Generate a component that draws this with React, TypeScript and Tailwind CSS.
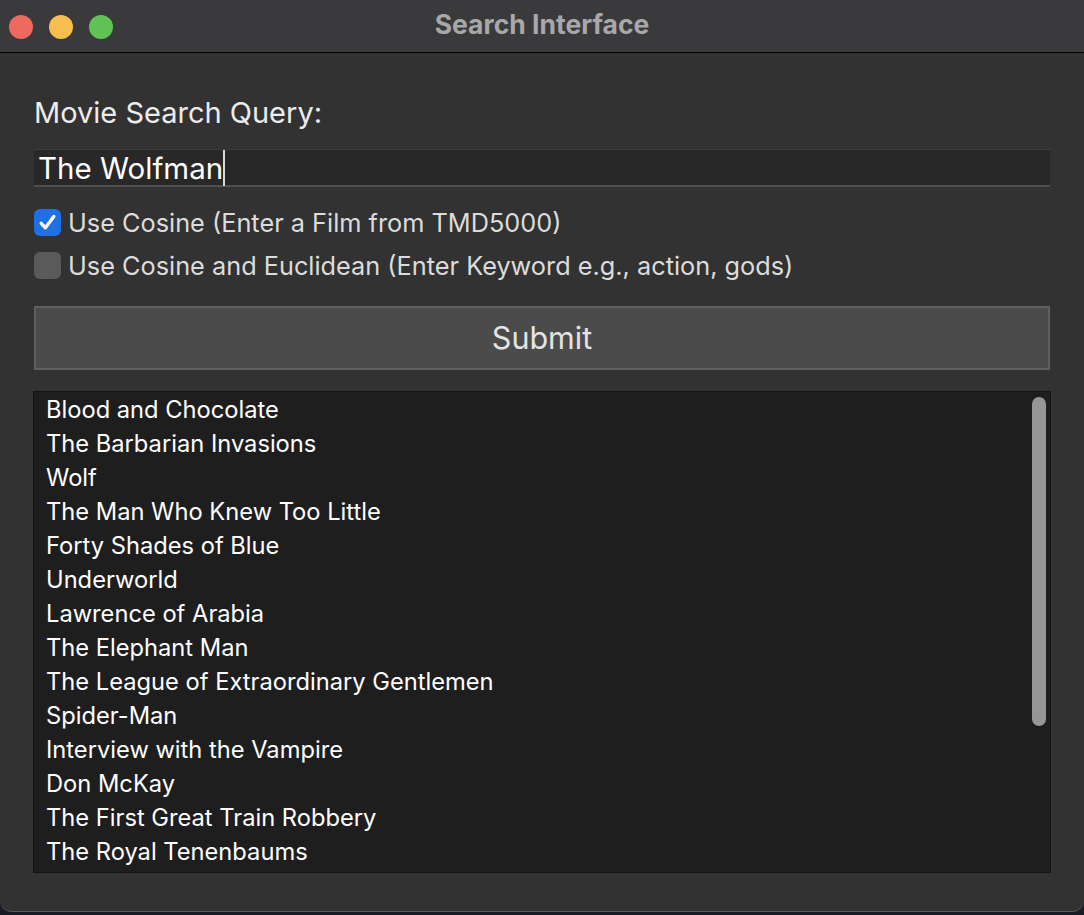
import React, { useState } from 'react';

const movies = [
  'Blood and Chocolate',
  'The Barbarian Invasions',
  'Wolf',
  'The Man Who Knew Too Little',
  'Forty Shades of Blue',
  'Underworld',
  'Lawrence of Arabia',
  'The Elephant Man',
  'The League of Extraordinary Gentlemen',
  'Spider-Man',
  'Interview with the Vampire',
  'Don McKay',
  'The First Great Train Robbery',
  'The Royal Tenenbaums',
];

function Check({ checked, label, onToggle }: { checked: boolean; label: string; onToggle: () => void }) {
  return (
    <div className="flex items-center gap-[7px] h-[27px] cursor-pointer" onClick={onToggle}>
      <span
        className={`w-[27px] h-[27px] shrink-0 rounded-[6px] flex items-center justify-center ${
          checked ? 'bg-[#1f6fe5]' : 'bg-[#5a5a5a]'
        }`}
      >
        {checked && (
          <svg width="21" height="21" viewBox="0 0 20 20" fill="none">
            <path d="M4 10.8 L8 15 L16 4.2" stroke="white" strokeWidth="3.2" strokeLinecap="round" strokeLinejoin="round" />
          </svg>
        )}
      </span>
      <span className="text-[25.3px] text-[#dcdcdc] whitespace-nowrap">{label}</span>
    </div>
  );
}

export default function App() {
  const [cosine, setCosine] = useState(true);
  const [euclid, setEuclid] = useState(false);

  return (
    <div
      className="w-[1084px] h-[915px] bg-[#1b1b26] overflow-hidden"
      style={{ fontFamily: 'Inter, "Liberation Sans", sans-serif' }}
    >
      <div className="h-[912px] flex flex-col bg-[#323232] rounded-b-[12px] border-b border-[#5a5a5a] overflow-hidden">
        {/* title bar */}
        <div className="relative h-[53px] shrink-0 bg-[#3a3a3c] border-b border-black flex items-center">
          <div className="flex items-center gap-4 pl-[9px] pt-[2px]">
            <span className="w-6 h-6 rounded-full bg-[#ee6a5f]" />
            <span className="w-6 h-6 rounded-full bg-[#f5be4f]" />
            <span className="w-6 h-6 rounded-full bg-[#5fc454]" />
          </div>
          <div className="absolute inset-0 flex items-center justify-center text-[26.5px] font-bold text-[#a8a8a8] pb-[3px]">
            Search Interface
          </div>
        </div>

        {/* body */}
        <div className="flex flex-col px-[34px] pt-[40px]">
          <label className="text-[29px] text-[#ececec] leading-[40px]">Movie Search Query:</label>

          <div className="mt-[16px] h-[38px] bg-[#282828] border-t border-[#3c3c3c] border-b-2 border-b-[#4f4f4f] flex items-center pl-[4px]">
            <span className="text-[29.5px] text-white leading-[36px] whitespace-nowrap">The Wolfman</span>
            <span className="w-[2px] h-[36px] bg-[#d8d8d8]" />
          </div>

          <div className="mt-[22px] flex flex-col gap-[16px]">
            <Check checked={cosine} onToggle={() => setCosine(!cosine)} label="Use Cosine (Enter a Film from TMD5000)" />
            <Check
              checked={euclid}
              onToggle={() => setEuclid(!euclid)}
              label="Use Cosine and Euclidean (Enter Keyword e.g., action, gods)"
            />
          </div>

          <button className="mt-[27px] h-[64px] bg-[#4b4b4b] border-2 border-[#5f5f5f] text-[30.5px] text-[#e4e4e4]">
            Submit
          </button>

          <div className="mt-[21px] -mx-px h-[482px] bg-[#1e1e1e] border border-[#141414] relative">
            <ul className="pt-[1px] pl-[12px]">
              {movies.map((m) => (
                <li key={m} className="h-[34px] leading-[34px] text-[23.7px] text-white">
                  {m}
                </li>
              ))}
            </ul>
            <div className="absolute right-[4px] top-[5px] w-[14px] h-[329px] rounded-full bg-[#969696]" />
          </div>
        </div>
      </div>
    </div>
  );
}
